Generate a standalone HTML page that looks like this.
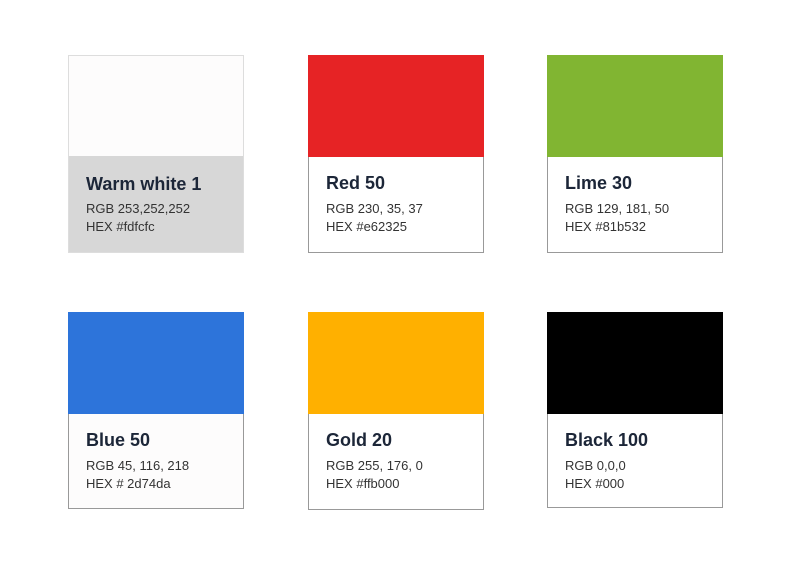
<!DOCTYPE html>
<html><head><style>
body{margin:0;width:791px;height:579px;background:#fff;font-family:"Liberation Sans",sans-serif;position:relative;overflow:hidden}
.c{position:absolute;width:174px;border:1px solid #999;box-sizing:content-box;background:#fff}
.s{height:102px}
.t{position:absolute;left:17px;top:118px;font-weight:bold;font-size:18px;color:#1c2638}
.l{position:absolute;left:17px;font-size:13px;color:#333}
</style></head><body>
<div class="c" style="left:68px;top:55px;height:196px;border-color:#ddd;background:#d7d7d7"><div class="s" style="background:#fdfcfc;height:100px"></div><div class="t">Warm white 1</div><div class="l" style="top:145px">RGB 253,252,252</div><div class="l" style="top:163px">HEX #fdfcfc</div></div>
<div class="c" style="left:308px;top:55px;height:197px;border-top:none;border-color:#999"><div class="s" style="background:#e62325;margin:0 -1px;"></div><div class="t">Red 50</div><div class="l" style="top:146px">RGB 230, 35, 37</div><div class="l" style="top:164px">HEX #e62325</div></div>
<div class="c" style="left:547px;top:55px;height:197px;border-top:none"><div class="s" style="background:#81b532;margin:0 -1px;"></div><div class="t">Lime 30</div><div class="l" style="top:146px">RGB 129, 181, 50</div><div class="l" style="top:164px">HEX #81b532</div></div>
<div class="c" style="left:68px;top:312px;height:196px;border-top:none;background:#fdfcfc"><div class="s" style="background:#2d74da;margin:0 -1px;"></div><div class="t">Blue 50</div><div class="l" style="top:146px">RGB 45, 116, 218</div><div class="l" style="top:164px">HEX # 2d74da</div></div>
<div class="c" style="left:308px;top:312px;height:197px;border-top:none"><div class="s" style="background:#ffb000;margin:0 -1px;"></div><div class="t">Gold 20</div><div class="l" style="top:146px">RGB 255, 176, 0</div><div class="l" style="top:164px">HEX #ffb000</div></div>
<div class="c" style="left:547px;top:312px;height:195px;border-top:none"><div class="s" style="background:#000;margin:0 -1px;"></div><div class="t">Black 100</div><div class="l" style="top:146px">RGB 0,0,0</div><div class="l" style="top:164px">HEX #000</div></div>
</body></html>
